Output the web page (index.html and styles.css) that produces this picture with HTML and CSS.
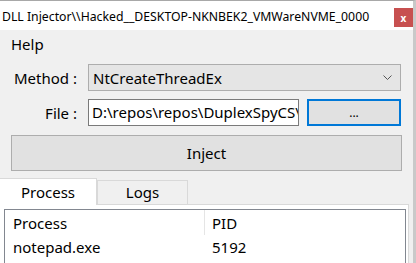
FILE: index.html
```html
<!DOCTYPE html>
<html lang="en">
<head>
  <meta charset="UTF-8">
  <title>DLL Injector</title>
  <link rel="stylesheet" href="styles.css">
</head>
<body>
  <div class="window">
    <div class="titlebar">
      <span class="title">DLL Injector\\Hacked__DESKTOP-NKNBEK2_VMWareNVME_0000</span>
      <span class="close">x</span>
    </div>
    <div class="menubar"><span class="menu-item">Help</span></div>

    <div class="form">
      <div class="row">
        <label class="label">Method :</label>
        <div class="combo">
          <span>NtCreateThreadEx</span>
          <svg class="chevron" width="9" height="6" viewBox="0 0 9 6"><path d="M0.5 0.5 L4.5 4.5 L8.5 0.5" fill="none" stroke="#555" stroke-width="1"/></svg>
        </div>
      </div>
      <div class="row file-row">
        <label class="label">File :</label>
        <div class="textbox"><span>D:\repos\repos\DuplexSpyCS\</span></div>
        <button class="browse">...</button>
      </div>
      <button class="inject">Inject</button>
    </div>

    <div class="tabs">
      <div class="tab active">Process</div>
      <div class="tab">Logs</div>
    </div>
    <div class="panel">
      <div class="listview">
        <div class="lv-row lv-head">
          <div class="col-name">Process</div>
          <div class="col-pid">PID</div>
        </div>
        <div class="lv-row">
          <div class="col-name">notepad.exe</div>
          <div class="col-pid">5192</div>
        </div>
      </div>
    </div>
  </div>
</body>
</html>
```

FILE: styles.css
```css
body {
  margin: 0;
  background: #f0f0f0;
  font-family: "Noto Sans", sans-serif;
  font-size: 15px;
  color: #000;
  overflow: hidden;
}
.window {
  width: 413px;
  height: 263px;
  border-right: 3px solid #c9c9c9;
  border-top: 1px solid #a8a8a8;
  overflow: hidden;
}
.titlebar {
  height: 29px;
  background: #fff;
  display: flex;
  align-items: flex-start;
  justify-content: space-between;
}
.title {
  font-size: 12.25px;
  margin: 7px 0 0 2px;
  white-space: nowrap;
}
.close {
  width: 19px;
  height: 19px;
  margin-top: 7px;
  background: #c75050;
  color: #fff;
  font-size: 10px;
  font-weight: bold;
  display: flex;
  align-items: center;
  justify-content: center;
}
.menubar {
  height: 28px;
  display: flex;
  align-items: center;
  padding-left: 11px;
}
.form {
  padding: 6px 12px 0 11px;
}
.row {
  display: flex;
  align-items: center;
  height: 27px;
}
.file-row {
  margin-top: 8px;
}
.label {
  width: 66px;
  text-align: right;
  padding-right: 11px;
  flex: none;
}
.combo {
  width: 314px;
  height: 27px;
  box-sizing: border-box;
  background: #e5e5e5;
  border: 1px solid #adadad;
  display: flex;
  align-items: center;
  justify-content: space-between;
  padding: 0 8px 0 4px;
}
.textbox {
  width: 211px;
  height: 27px;
  box-sizing: border-box;
  background: #fff;
  border: 1px solid #7a7a7a;
  padding: 2px 0 0 3px;
  white-space: nowrap;
  overflow: hidden;
}
.browse {
  width: 94px;
  height: 27px;
  margin-left: 8px;
  background: #e1e1e1;
  border: 2px solid #0078d7;
  font: inherit;
  font-size: 12px;
  padding: 0;
}
.inject {
  display: block;
  width: 391px;
  height: 36px;
  margin-top: 9px;
  background: #e1e1e1;
  border: 1px solid #adadad;
  font: inherit;
  padding: 0;
}
.tabs {
  display: flex;
  align-items: flex-end;
  margin-top: 6px;
  height: 27px;
}
.tab {
  height: 24px;
  box-sizing: border-box;
  width: 91px;
  text-align: center;
  background: #f0f0f0;
  border: 1px solid #d9d9d9;
  border-bottom: none;
  line-height: 22px;
}
.tab.active {
  width: 97px;
  height: 27px;
  background: #fff;
  border-left: none;
  border-right: 1px solid #d9d9d9;
  line-height: 26px;
  position: relative;
  z-index: 1;
  margin-bottom: -1px;
}
.panel {
  width: 409px;
  height: 60px;
  background: #fff;
  border-top: 1px solid #d9d9d9;
  border-right: 1px solid #d9d9d9;
  box-sizing: border-box;
  padding: 4px 0 0 4px;
}
.listview {
  width: 402px;
  height: 60px;
  box-sizing: border-box;
  border: 1px solid #828790;
}
.lv-row {
  display: flex;
  height: 24px;
  align-items: center;
}
.lv-head {
  height: 25px;
}
.col-name {
  box-sizing: border-box;
  width: 200px;
  padding-left: 8px;
  height: 100%;
  display: flex;
  align-items: center;
}
.lv-head .col-name {
  border-right: 1px solid #e5e5e5;
}
.col-pid {
  padding-left: 7px;
}
```
